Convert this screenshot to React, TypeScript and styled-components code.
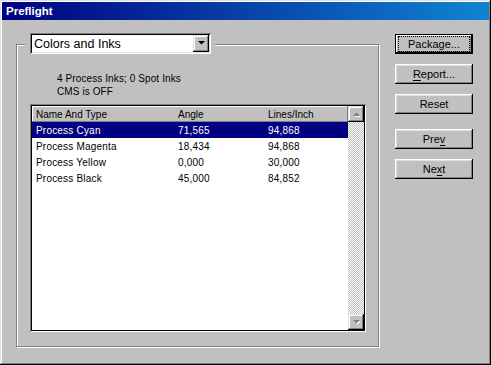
import React from "react";
import styled, { createGlobalStyle } from "styled-components";

const inks = [
  { name: "Process Cyan", angle: "71,565", lines: "94,868" },
  { name: "Process Magenta", angle: "18,434", lines: "94,868" },
  { name: "Process Yellow", angle: "0,000", lines: "30,000" },
  { name: "Process Black", angle: "45,000", lines: "84,852" },
];

const GlobalStyle = createGlobalStyle`
  html, body {
    margin: 0;
    padding: 0;
    background: #c0c0c0;
  }
  body {
    font-family: "Liberation Sans", Arial, sans-serif;
  }
`;

const Arrow = ({ up, disabled }: { up?: boolean; disabled?: boolean }) => (
  <svg width="7" height="5" viewBox="0 0 7 5" style={{ overflow: "visible" }}>
    {disabled && (
      <polygon
        points={up ? "1,5 8,5 4.5,1.5" : "1,1 8,1 4.5,4.5"}
        fill="#fff"
      />
    )}
    <polygon
      points={up ? "0,4 7,4 3.5,0.5" : "0,0 7,0 3.5,3.5"}
      fill={disabled ? "#808080" : "#000"}
    />
  </svg>
);

const Underline = styled.span`
  text-decoration: underline;
  text-underline-offset: 2px;
`;

const App = () => {
  return (
    <>
      <GlobalStyle />
      <Window>
        <TitleBar>Preflight</TitleBar>
        <Body>
          <Group>
            <LegendWrap>
              <Dropdown>
                <DropdownText>Colors and Inks</DropdownText>
                <DropdownButton>
                  <Arrow />
                </DropdownButton>
              </Dropdown>
            </LegendWrap>
            <Info>
              <div>4 Process Inks; 0 Spot Inks</div>
              <div>CMS is OFF</div>
            </Info>
            <ListBox>
              <ListMain>
                <HeaderRow>
                  <HeaderCell>Name And Type</HeaderCell>
                  <HeaderCell>Angle</HeaderCell>
                  <HeaderCell>Lines/Inch</HeaderCell>
                </HeaderRow>
                {inks.map((ink, i) => (
                  <Row key={ink.name} selected={i === 0}>
                    <Cell>{ink.name}</Cell>
                    <Cell>{ink.angle}</Cell>
                    <Cell>{ink.lines}</Cell>
                  </Row>
                ))}
              </ListMain>
              <ScrollBar>
                <ScrollButton>
                  <Arrow up disabled />
                </ScrollButton>
                <ScrollTrack />
                <ScrollButton>
                  <Arrow disabled />
                </ScrollButton>
              </ScrollBar>
            </ListBox>
          </Group>
          <ButtonColumn>
            <DefaultButton>
              <FocusRect>Package...</FocusRect>
            </DefaultButton>
            <Button>
              <Underline>R</Underline>eport...
            </Button>
            <Button>Reset</Button>
            <Button $gap={15}>
              Pre<Underline>v</Underline>
            </Button>
            <Button>
              Ne<Underline>x</Underline>t
            </Button>
          </ButtonColumn>
        </Body>
      </Window>
    </>
  );
};

export default App;

const Window = styled.div`
  box-sizing: border-box;
  width: 491px;
  height: 365px;
  padding: 2px;
  background: #c0c0c0;
  box-shadow: inset -1px -1px 0 #000, inset 1px 1px 0 #dfdfdf,
    inset -2px -2px 0 #808080, inset 2px 2px 0 #fff;
  display: flex;
  flex-direction: column;
`;

const TitleBar = styled.div`
  height: 18px;
  padding-left: 4px;
  display: flex;
  align-items: center;
  background: linear-gradient(90deg, #000080, #1084d0);
  color: #fff;
  font-weight: bold;
  font-size: 11.5px;
`;

const Body = styled.div`
  display: flex;
  padding: 0 0 0 14px;
`;

const Group = styled.div`
  box-sizing: border-box;
  width: 363px;
  height: 303px;
  margin-top: 24px;
  border: 1px solid #808080;
  box-shadow: 1px 1px 0 #fff, inset 1px 1px 0 #fff;
  display: flex;
  flex-direction: column;
  align-items: flex-start;
`;

const LegendWrap = styled.div`
  margin: -12px 0 0 8px;
  padding: 0 4px 0 5px;
  background: #c0c0c0;
`;

const Dropdown = styled.div`
  box-sizing: border-box;
  width: 181px;
  height: 21px;
  background: #fff;
  display: flex;
  align-items: center;
  justify-content: space-between;
  padding: 2px;
  box-shadow: inset 1px 1px 0 #808080, inset -1px -1px 0 #fff,
    inset 2px 2px 0 #000, inset -2px -2px 0 #dfdfdf;
`;

const DropdownText = styled.span`
  font-size: 12.5px;
  padding-left: 2px;
  color: #000;
`;

const DropdownButton = styled.div`
  width: 16px;
  height: 17px;
  display: flex;
  align-items: center;
  justify-content: center;
  background: #c0c0c0;
  box-shadow: inset -1px -1px 0 #000, inset 1px 1px 0 #dfdfdf,
    inset -2px -2px 0 #808080, inset 2px 2px 0 #fff;
`;

const Info = styled.div`
  margin: 18px 0 0 40px;
  font-size: 10px;
  line-height: 13px;
  letter-spacing: 0.1px;
  color: #000;
`;

const ListBox = styled.div`
  box-sizing: border-box;
  width: 336px;
  height: 228px;
  margin: 6px 0 0 13px;
  padding: 2px;
  background: #fff;
  display: flex;
  box-shadow: inset 1px 1px 0 #808080, inset -1px -1px 0 #fff,
    inset 2px 2px 0 #000, inset -2px -2px 0 #000;
`;

const ListMain = styled.div`
  flex: 1;
  display: flex;
  flex-direction: column;
`;

const HeaderRow = styled.div`
  display: grid;
  grid-template-columns: 142px 90px 1fr;
  height: 16px;
  align-items: center;
  background: #c0c0c0;
  box-shadow: inset -1px -1px 0 #808080, inset 1px 1px 0 #fff;
`;

const HeaderCell = styled.div`
  font-size: 10px;
  padding-left: 4px;
  color: #000;
`;

const Row = styled.div<{ selected?: boolean }>`
  display: grid;
  grid-template-columns: 142px 90px 1fr;
  height: 16px;
  align-items: center;
  background: ${(p) => (p.selected ? "#000080" : "#fff")};
  color: ${(p) => (p.selected ? "#fff" : "#000")};
  font-size: 10px;
  letter-spacing: 0.2px;
`;

const Cell = styled.div`
  padding-left: 4px;
`;

const ScrollBar = styled.div`
  width: 16px;
  display: flex;
  flex-direction: column;
`;

const ScrollButton = styled.div`
  width: 16px;
  height: 16px;
  display: flex;
  align-items: center;
  justify-content: center;
  background: #c0c0c0;
  box-shadow: inset -1px -1px 0 #000, inset 1px 1px 0 #dfdfdf,
    inset -2px -2px 0 #808080, inset 2px 2px 0 #fff;
`;

const ScrollTrack = styled.div`
  flex: 1;
  background: repeating-conic-gradient(#c0c0c0 0 25%, #fff 0 50%) 0 0 / 2px
    2px;
`;

const ButtonColumn = styled.div`
  display: flex;
  flex-direction: column;
  margin-left: 16px;
  padding-top: 14px;
  gap: 10px;
`;

const Button = styled.div<{ $gap?: number }>`
  box-sizing: border-box;
  width: 78px;
  height: 20px;
  margin-top: ${(p) => (p.$gap ? p.$gap - 10 : 0)}px;
  display: flex;
  align-items: center;
  justify-content: center;
  font-size: 11px;
  color: #000;
  background: #c0c0c0;
  box-shadow: inset -1px -1px 0 #000, inset 1px 1px 0 #fff,
    inset -2px -2px 0 #808080, inset 2px 2px 0 #dfdfdf;
`;

const DefaultButton = styled(Button)`
  padding: 3px 4px;
  box-shadow: inset 0 0 0 1px #000, inset -2px -2px 0 #000,
    inset 2px 2px 0 #fff, inset -3px -3px 0 #808080;
`;

const FocusRect = styled.div`
  flex: 1;
  height: 100%;
  box-sizing: border-box;
  display: flex;
  align-items: center;
  justify-content: center;
  outline: 1px dotted #000;
`;
